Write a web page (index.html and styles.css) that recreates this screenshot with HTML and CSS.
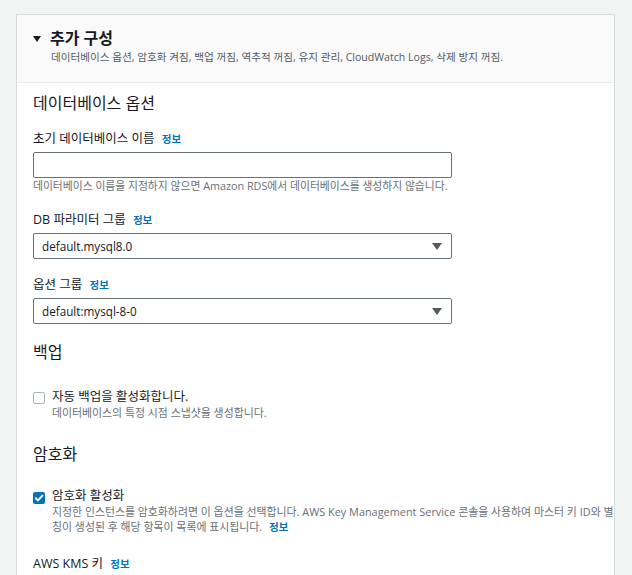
FILE: index.html
```html
<!DOCTYPE html>
<html lang="ko">
<head>
<meta charset="utf-8">
<link rel="stylesheet" href="styles.css">
</head>
<body>
<div class="page">
  <div class="card">
    <div class="card-header">
      <div class="title-row">
        <span class="caret"></span>
        <h2 class="title">추가 구성</h2>
      </div>
      <div class="subtitle">데이터베이스 옵션, 암호화 켜짐, 백업 꺼짐, 역추적 꺼짐, 유지 관리, CloudWatch Logs, 삭제 방지 꺼짐.</div>
    </div>
    <div class="card-body">
      <h3 class="section-title first">데이터베이스 옵션</h3>

      <div class="field">
        <div class="label">초기 데이터베이스 이름 <a class="info">정보</a></div>
        <div class="input"></div>
        <div class="hint">데이터베이스 이름을 지정하지 않으면 Amazon RDS에서 데이터베이스를 생성하지 않습니다.</div>
      </div>

      <div class="field">
        <div class="label">DB 파라미터 그룹 <a class="info">정보</a></div>
        <div class="select"><span>default.mysql8.0</span><span class="sel-caret"></span></div>
      </div>

      <div class="field">
        <div class="label">옵션 그룹 <a class="info">정보</a></div>
        <div class="select"><span>default:mysql-8-0</span><span class="sel-caret"></span></div>
      </div>

      <h3 class="section-title">백업</h3>
      <div class="check-row backup">
        <span class="checkbox"></span>
        <div class="check-text">
          <div class="check-label">자동 백업을 활성화합니다.</div>
          <div class="check-desc">데이터베이스의 특정 시점 스냅샷을 생성합니다.</div>
        </div>
      </div>

      <h3 class="section-title">암호화</h3>
      <div class="check-row enc">
        <span class="checkbox checked"><svg viewBox="0 0 12 12" width="12" height="12"><path d="M2.8 6.2 L5 8.4 L9.4 3.6" fill="none" stroke="#fff" stroke-width="2" stroke-linecap="round" stroke-linejoin="round"/></svg></span>
        <div class="check-text">
          <div class="check-label">암호화 활성화</div>
          <div class="check-desc">지정한 인스턴스를 암호화하려면 이 옵션을 선택합니다. AWS Key Management Service 콘솔을 사용하여 마스터 키 ID와 별칭이 생성된 후 해당 항목이 목록에 표시됩니다. <a class="info">정보</a></div>
        </div>
      </div>

      <div class="field kms">
        <div class="label">AWS KMS 키 <a class="info">정보</a></div>
      </div>
    </div>
  </div>
</div>
</body>
</html>
```

FILE: styles.css
```css
html, body {
  margin: 0;
  padding: 0;
}
body {
  background: #f2f3f3;
  font-family: "Open Sans", "Noto Sans CJK KR", sans-serif;
  color: #16191f;
  height: 575px;
  overflow: hidden;
}
.page {
  padding: 14px 17px 0 16px;
}
.card {
  background: #fff;
  border: 1px solid #d5dbdb;
  border-bottom: none;
  height: 600px;
}
.card-header {
  background: #fafafa;
  border-bottom: 1px solid #eaeded;
  padding: 12px 16px 17px 16px;
}
.title-row {
  display: flex;
  align-items: center;
  gap: 9px;
}
.caret {
  width: 0;
  height: 0;
  border-left: 4.5px solid transparent;
  border-right: 4.5px solid transparent;
  border-top: 6px solid #16191f;
  margin-top: 1px;
}
.title {
  margin: 0;
  font-size: 16px;
  line-height: 22px;
  font-weight: 700;
}
.subtitle {
  margin-left: 18px;
  font-size: 10.6px;
  line-height: 16px;
  color: #545b64;
}
.card-body {
  padding: 0 16px;
}
.section-title {
  margin: 0;
  font-size: 16px;
  line-height: 22px;
  font-weight: 400;
  padding-top: 1px;
  padding-bottom: 15px;
}
.section-title.first {
  padding-top: 9px;
}
.field {
  margin-bottom: 16px;
}
.label {
  font-size: 12.5px;
  line-height: 20px;
  margin-bottom: 3px;
}
.info {
  color: #0073bb;
  font-size: 10.5px;
  font-weight: 700;
  margin-left: 4px;
}
.input, .select {
  width: 417px;
  height: 24px;
  border: 1px solid #687078;
  border-radius: 2px;
  background: #fff;
}
.select {
  display: flex;
  align-items: center;
  justify-content: space-between;
  padding: 0 9px 0 8px;
  width: 400px;
  font-size: 11.7px;
}
.sel-caret {
  width: 0;
  height: 0;
  border-left: 5px solid transparent;
  border-right: 5px solid transparent;
  border-top: 7px solid #545b64;
}
.hint {
  font-size: 10.8px;
  line-height: 16px;
  color: #687078;
}
.check-row {
  display: flex;
  gap: 7px;
}
.backup {
  margin-top: 11px;
  margin-bottom: 22px;
}
.enc {
  margin-top: 8px;
}
.checkbox {
  flex: none;
  width: 10px;
  height: 10px;
  border: 1px solid #aab7b8;
  border-radius: 2px;
  margin-top: 3px;
  background: #fff;
}
.checkbox.checked {
  width: 12px;
  height: 12px;
  border: none;
  background: #0073bb;
  display: flex;
  margin-top: 4px;
}
.check-label {
  font-size: 12.5px;
  line-height: 16px;
}
.check-desc {
  font-size: 10.9px;
  line-height: 15px;
  color: #687078;
  width: 562px;
}
.kms {
  margin-top: 19px;
}
```
